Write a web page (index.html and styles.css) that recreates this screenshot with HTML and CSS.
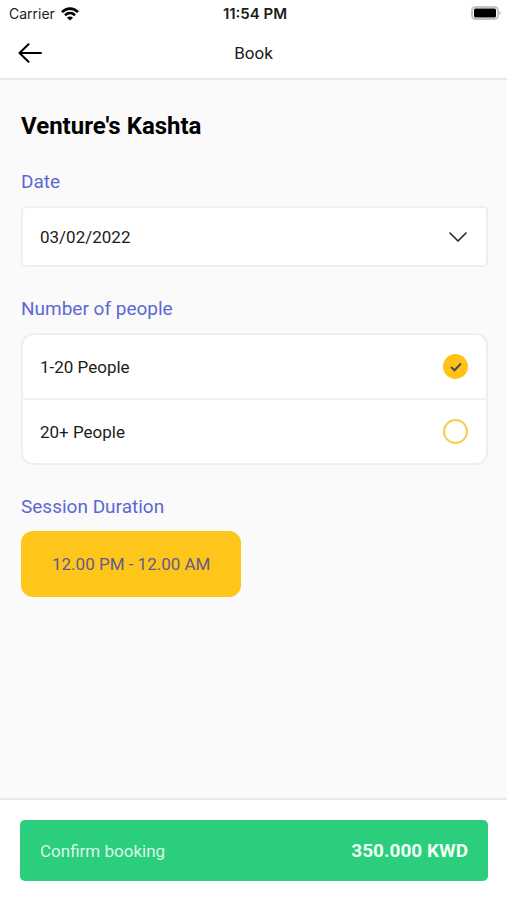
FILE: index.html
```html
<!DOCTYPE html>
<html lang="en">
<head>
<meta charset="utf-8">
<meta name="viewport" content="width=device-width, initial-scale=1">
<title>Book</title>
<link rel="stylesheet" href="styles.css">
</head>
<body>
<div class="status-bar">
  <div class="carrier">
    <span>Carrier</span>
    <svg width="18" height="14" viewBox="0 0 18 14" aria-hidden="true">
      <g fill="none" stroke="#000" stroke-width="2.6">
        <path d="M1 5.1C5.6.5 12.4.5 17 5.1"/>
        <path d="M4 8.2c2.9-2.8 7.1-2.8 10 0"/>
      </g>
      <path d="M9 13.6 6 10.700c1.700-1.600 4.300-1.600 6 0z"/>
    </svg>
  </div>
  <span class="clock">11:54 PM</span>
  <svg class="battery" width="30" height="15" viewBox="0 0 30 15" aria-hidden="true">
    <rect x="1" y="1" width="26" height="12" rx="3.500" fill="#fff" stroke="#c4c4c4" stroke-width="2"/>
    <rect x="3" y="2.500" width="22" height="9" rx="1.500"/>
    <path d="M28.500 5v4c1.500-.6 1.500-3.400 0-4z" fill="#aaa"/>
  </svg>
</div>
<header class="nav-bar">
  <button class="back" type="button" aria-label="Back">
    <svg width="24" height="20" viewBox="0 0 24 20" fill="none" stroke="#000" stroke-width="2" stroke-linecap="round" stroke-linejoin="round" aria-hidden="true">
      <path d="M23 10H1.500M10.500 1.200 1.500 10l9 8.800"/>
    </svg>
  </button>
  <h1 class="nav-title">Book</h1>
</header>
<form class="booking">
  <main class="content">
    <h2 class="venue">Venture's Kashta</h2>
    <div class="field">
      <label class="label" for="date">Date</label>
      <div class="select-wrap">
        <select id="date" class="select">
          <option>03/02/2022</option>
        </select>
        <svg class="chevron" width="18" height="10" viewBox="0 0 18 10" fill="none" stroke="#222" stroke-width="1.600" stroke-linecap="round" stroke-linejoin="round" aria-hidden="true">
          <path d="m1 1 8 8 8-8"/>
        </svg>
      </div>
    </div>
    <fieldset class="field">
      <legend class="label">Number of people</legend>
      <div class="options">
        <label class="option">
          <span>1-20 People</span>
          <span class="check">
            <input type="radio" name="people" checked>
            <svg class="tick" width="12" height="10" viewBox="0 0 12 10" fill="none" stroke="#4c4858" stroke-width="2" aria-hidden="true">
              <path d="m1 5 3.500 3.300L11 1.500"/>
            </svg>
          </span>
        </label>
        <label class="option">
          <span>20+ People</span>
          <span class="check">
            <input type="radio" name="people">
          </span>
        </label>
      </div>
    </fieldset>
    <section class="field">
      <h3 class="label">Session Duration</h3>
      <button class="slot" type="button" aria-pressed="true">12.00 PM - 12.00 AM</button>
    </section>
  </main>
  <footer class="footer">
    <button class="confirm" type="submit">
      <span>Confirm booking</span>
      <span class="price">350.000 KWD</span>
    </button>
  </footer>
</form>
</body>
</html>
```
FILE: styles.css
```css
* {
  box-sizing: border-box;
}

body {
  display: flex;
  flex-direction: column;
  min-height: 100vh;
  margin: 0;
  background: #fff;
  color: #1c1c1c;
  font-family: Roboto, "Liberation Sans", sans-serif;
  font-size: 17px;
  line-height: 24px;
}

button,
select,
input {
  margin: 0;
  font: inherit;
  color: inherit;
}

button {
  border: 0;
  cursor: pointer;
}

svg {
  display: block;
}

.status-bar {
  display: grid;
  grid-template-columns: 1fr auto 1fr;
  align-items: center;
  height: 27px;
  padding: 0 6px 0 9px;
  font-family: Inter, "Liberation Sans", sans-serif;
  font-size: 14px;
  line-height: 27px;
}

.carrier {
  display: flex;
  align-items: center;
  gap: 6px;
}

.clock {
  font-size: 15px;
  font-weight: 600;
}

.battery {
  justify-self: end;
}

.nav-bar {
  display: grid;
  grid-template-columns: 1fr auto 1fr;
  align-items: center;
  height: 53px;
  padding: 0 18px;
  border-bottom: 2px solid #e9e9e9;
}

.back {
  justify-self: start;
  padding: 0;
  background: none;
}

.nav-title {
  margin: 0;
  font-size: 17px;
  font-weight: 400;
}

.booking {
  display: flex;
  flex: 1;
  flex-direction: column;
}

.content {
  flex: 1;
  padding: 30px 19px 30px 21px;
  background: #fafafa;
}

.venue {
  margin: 0 0 28px;
  color: #000;
  font-size: 24px;
  font-weight: 700;
  line-height: 32px;
}

.field {
  min-width: 0;
  margin: 0 0 30px;
  padding: 0;
  border: 0;
}

.label {
  display: block;
  margin: 0 0 12px;
  padding: 0;
  color: #5c68d2;
  font-size: 19px;
  font-weight: 400;
}

.select-wrap {
  position: relative;
}

.select {
  display: block;
  width: 100%;
  height: 61px;
  padding: 0 48px 0 17px;
  appearance: none;
  background: #fff;
  border: 2px solid #efefef;
  border-radius: 5px;
}

.chevron {
  position: absolute;
  top: 26px;
  right: 21px;
  pointer-events: none;
}

.options {
  background: #fff;
  border: 2px solid #efefef;
  border-radius: 12px;
}

.option {
  display: flex;
  align-items: center;
  justify-content: space-between;
  height: 63px;
  padding: 0 18px 0 17px;
}

.option + .option {
  height: 65px;
  border-top: 2px solid #f3f3f3;
}

.check {
  display: grid;
  place-items: center;
}

.check > * {
  grid-area: 1 / 1;
}

.check input {
  width: 25px;
  height: 25px;
  appearance: none;
  background: #fff;
  border: 2px solid #f8cc52;
  border-radius: 50%;
}

.check input:checked {
  background: #fec316;
  border-color: #fec316;
}

.tick {
  z-index: 1;
  pointer-events: none;
}

.slot {
  height: 66px;
  padding: 0 31px;
  background: #fec51a;
  border-radius: 12px;
  color: #645b8e;
}

.footer {
  padding: 20px 19px 19px 20px;
  background: #fff;
  border-top: 2px solid #e9e9e9;
}

.confirm {
  display: flex;
  align-items: center;
  justify-content: space-between;
  width: 100%;
  height: 61px;
  padding: 0 20px;
  background: #2bce7c;
  border-radius: 5px;
  color: #d8f9e7;
}

.price {
  color: #effff6;
  font-size: 19px;
  font-weight: 700;
}
```
